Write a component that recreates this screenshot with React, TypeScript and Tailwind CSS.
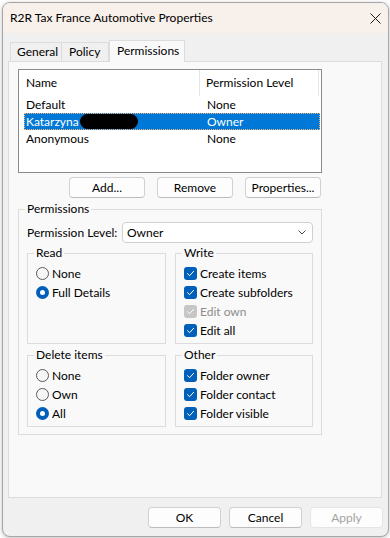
import React from 'react';

function Radio({ checked, label }: { checked?: boolean; label: string }) {
  return (
    <div className="flex h-[19px] items-center">
      {checked ? (
        <span className="flex h-[13px] w-[13px] items-center justify-center rounded-full bg-[#005fb8]">
          <span className="h-[5px] w-[5px] rounded-full bg-white" />
        </span>
      ) : (
        <span className="h-[13px] w-[13px] rounded-full border border-[#5b5b5b] bg-[#f6f6f6]" />
      )}
      <span className="ml-[3px]">{label}</span>
    </div>
  );
}

function Check({ label, disabled }: { label: string; disabled?: boolean }) {
  return (
    <div className="flex h-[19px] items-center">
      <span
        className={`flex h-[13px] w-[13px] items-center justify-center rounded-[3px] ${
          disabled ? 'bg-[#c6c6c6]' : 'bg-[#005fb8]'
        }`}
      >
        <svg width="9" height="9" viewBox="0 0 9 9" fill="none">
          <path d="M1.5 4.7 L3.6 6.7 L7.6 2.3" stroke="white" strokeWidth="1" strokeLinecap="round" strokeLinejoin="round" />
        </svg>
      </span>
      <span className={`ml-[3px] ${disabled ? 'text-[#8d8d8d]' : ''}`}>{label}</span>
    </div>
  );
}

function Group({ legend, children, className = '' }: { legend: string; children: React.ReactNode; className?: string }) {
  return (
    <fieldset className={`border border-[#dcdcdc] px-[6px] ${className}`}>
      <legend className="px-[2px] leading-[16px]">{legend}</legend>
      <div className="pl-[2px]">{children}</div>
    </fieldset>
  );
}

function Btn({ children, className = '' }: { children: React.ReactNode; className?: string }) {
  return (
    <div
      className={`flex h-[21px] items-center justify-center rounded-[4px] border border-[#d1d1d1] border-b-[#bcbcbc] bg-[#fdfdfd] ${className}`}
    >
      {children}
    </div>
  );
}

export default function App() {
  return (
    <div className="h-[538px] w-[390px] overflow-hidden bg-white pl-[2px] pt-[2px] font-['Lato','Noto_Sans',sans-serif] text-[12px] leading-[16px] text-black">
      <div className="flex h-[535px] w-[387px] flex-col overflow-hidden rounded-[8px] border border-[#a6a6a6] bg-[#f0f0f0] shadow-[0_1px_4px_rgba(0,0,0,0.25)]">
        {/* title bar */}
        <div className="flex h-[30px] shrink-0 items-center justify-between bg-[#f8f0eb] pl-[7px] pr-[7px]">
          <span>R2R Tax France Automotive Properties</span>
          <svg width="11" height="11" viewBox="0 0 11 11" fill="none">
            <path d="M0.5 0.5 L10.5 10.5 M10.5 0.5 L0.5 10.5" stroke="#1a1a1a" strokeWidth="1" />
          </svg>
        </div>

        {/* tabs */}
        <div className="mt-[7px] flex h-[21px] shrink-0 items-end pl-[7px]">
          <div className="flex h-[19px] w-[52px] items-center border-l border-r border-t border-[#dcdcdc] pl-[6px]">
            General
          </div>
          <div className="flex h-[19px] w-[47px] items-center border-r border-t border-[#dcdcdc] pl-[7px]">
            Policy
          </div>
          <div className="relative z-10 -mb-px flex h-[22px] w-[76px] items-start border-l border-r border-t border-[#dcdcdc] bg-[#f9f9f9] pl-[7px] pt-[2px]">
            Permissions
          </div>
        </div>

        {/* panel */}
        <div className="ml-[5px] h-[437px] w-[374px] shrink-0 border border-[#dcdcdc] bg-[#f9f9f9] pl-[9px] pt-[7px]">
          {/* list */}
          <div className="h-[104px] w-[304px] border border-[#8a8a8a] bg-white">
            <div className="flex h-[26px] items-center">
              <div className="flex h-full w-[181px] items-center border-r border-[#e5e5e5] pl-[7px]">Name</div>
              <div className="flex h-full w-[119px] items-center border-r border-[#e5e5e5] pl-[6px]">Permission Level</div>
            </div>
            <div className="ml-[5px] flex h-[17px] w-[296px] items-center pl-[2px]">
              <span className="w-[174px]">Default</span>
              <span className="pl-[7px]">None</span>
            </div>
            <div className="ml-[5px] flex h-[17px] w-[296px] items-center border border-dotted border-[#f3b57c] bg-[#0078d7] pl-[1px] text-white">
              <span className="flex w-[174px] items-center">
                Katarzyna
                <span className="ml-[1px] h-[15px] w-[58px] rounded-full bg-black" />
              </span>
              <span className="pl-[7px]">Owner</span>
            </div>
            <div className="ml-[5px] flex h-[17px] w-[296px] items-center pl-[2px]">
              <span className="w-[174px]">Anonymous</span>
              <span className="pl-[7px]">None</span>
            </div>
          </div>

          {/* list buttons */}
          <div className="mt-[4px] flex w-[303px] justify-end gap-[12px]">
            <Btn className="w-[76px]">Add...</Btn>
            <Btn className="w-[76px]">Remove</Btn>
            <Btn className="w-[76px]">Properties...</Btn>
          </div>

          {/* permissions */}
          <Group legend="Permissions" className="mt-[3px] w-[304px] pb-[7px]">
            <div className="mt-[5px] flex items-center">
              <span className="w-[95px]">Permission Level:</span>
              <div className="flex h-[21px] w-[191px] items-center justify-between rounded-[4px] border border-[#cfcfcf] bg-white pl-[4px] pr-[6px]">
                <span>Owner</span>
                <svg width="8" height="5" viewBox="0 0 8 5" fill="none">
                  <path d="M0.5 0.5 L4 4 L7.5 0.5" stroke="#444" strokeWidth="1" />
                </svg>
              </div>
            </div>

            <div className="mt-[2px] grid w-[286px] grid-cols-[139px_138px] gap-x-[9px]">
              <Group legend="Read" className="pb-[3px]">
                <div className="mt-[3px]">
                  <Radio label="None" />
                  <Radio label="Full Details" checked />
                </div>
              </Group>
              <Group legend="Write" className="pb-[3px]">
                <div className="mt-[3px]">
                  <Check label="Create items" />
                  <Check label="Create subfolders" />
                  <Check label="Edit own" disabled />
                  <Check label="Edit all" />
                </div>
              </Group>
            </div>

            <div className="mt-[3px] grid w-[286px] grid-cols-[139px_138px] gap-x-[9px]">
              <Group legend="Delete items" className="pb-[3px]">
                <div className="mt-[3px]">
                  <Radio label="None" />
                  <Radio label="Own" />
                  <Radio label="All" checked />
                </div>
              </Group>
              <Group legend="Other" className="pb-[3px]">
                <div className="mt-[3px]">
                  <Check label="Folder owner" />
                  <Check label="Folder contact" />
                  <Check label="Folder visible" />
                </div>
              </Group>
            </div>
          </Group>
        </div>

        {/* dialog buttons */}
        <div className="mt-[9px] flex justify-end gap-[8px] pr-[5px]">
          <Btn className="w-[73px] border-[#0067c0] border-b-[#0067c0]">OK</Btn>
          <Btn className="w-[73px]">Cancel</Btn>
          <Btn className="w-[73px] border-[#e5e5e5] border-b-[#e5e5e5] bg-[#f5f5f5] text-[#a3a3a3]">Apply</Btn>
        </div>
      </div>
    </div>
  );
}
